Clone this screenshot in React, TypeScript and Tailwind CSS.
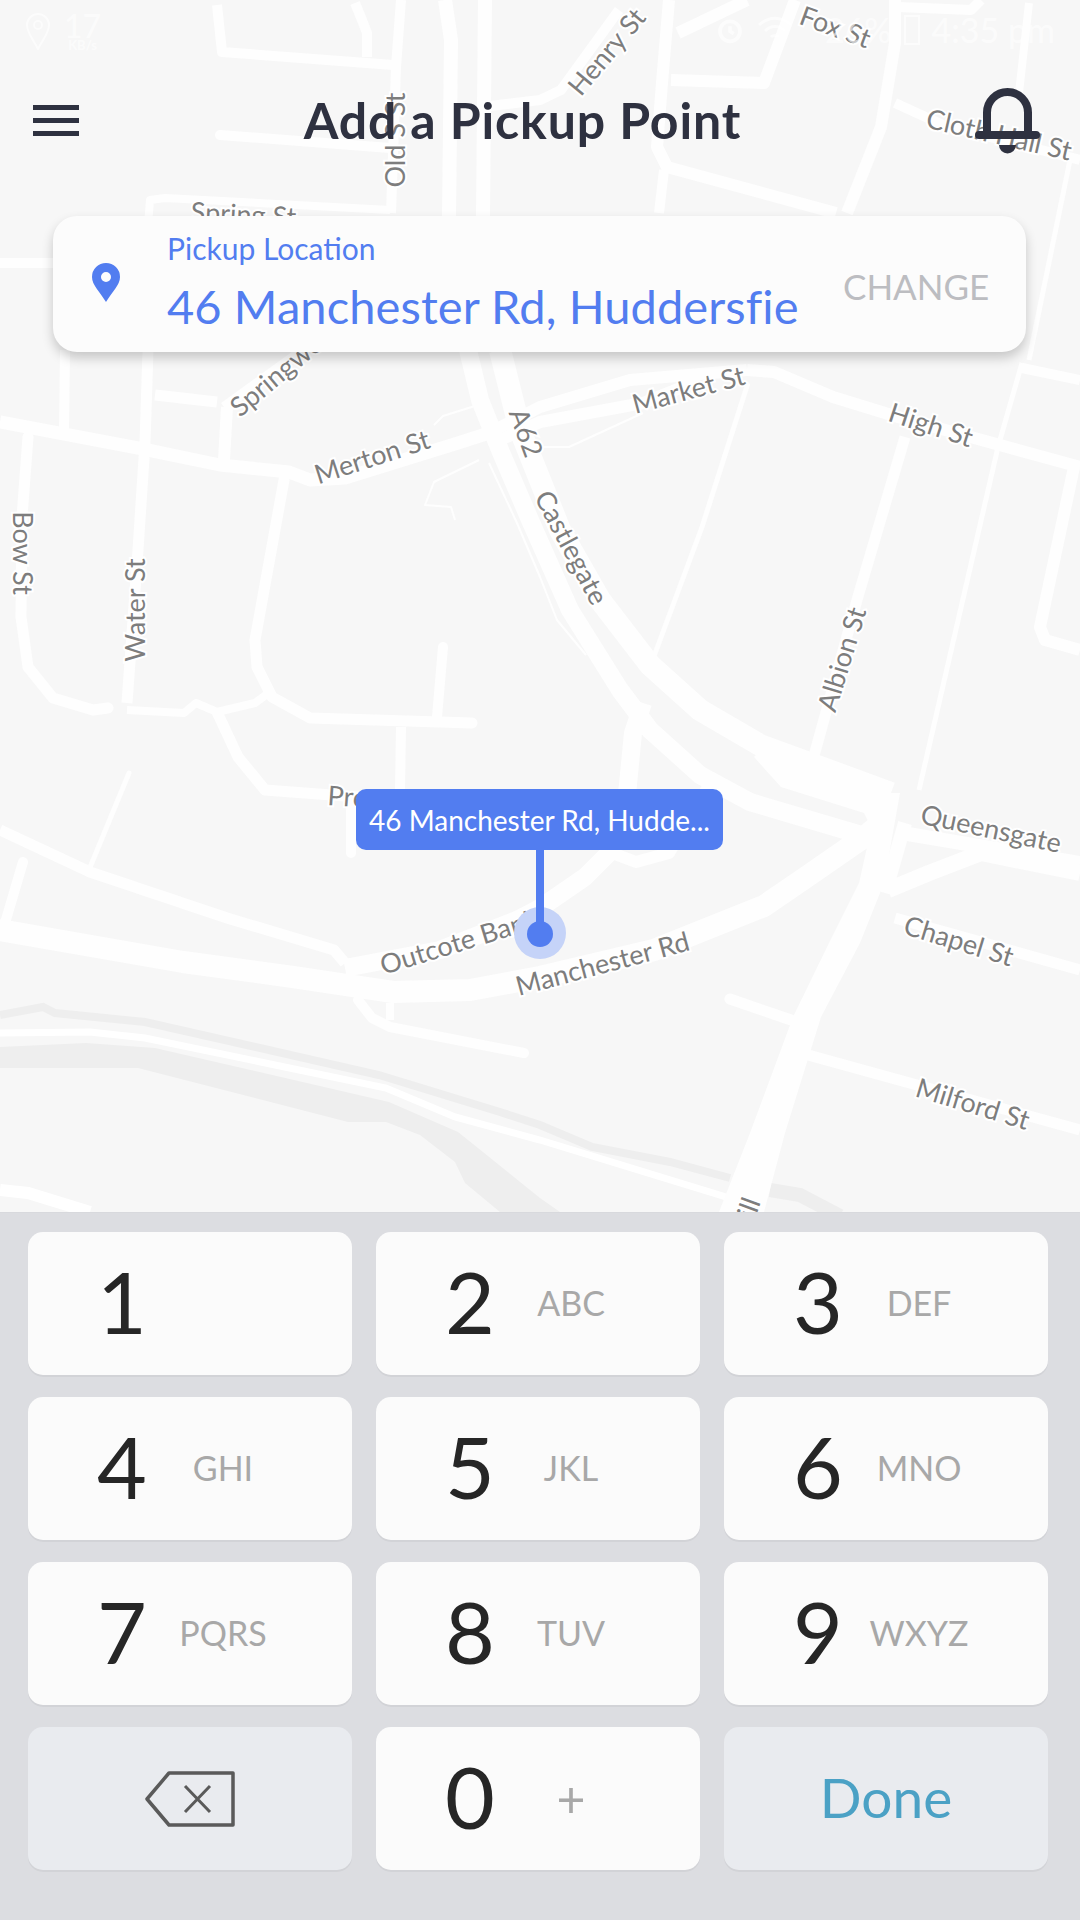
import React from 'react';

type Road = { w: number; d: string; cap?: boolean };

const roads: Road[] = [
  { w: 10, d: '217,5 222,52 393,65' },
  { w: 10, d: '355,3 362,20 367,33 367,57' },
  { w: 10, d: '401,0 396,67 391,213' },
  { w: 10, d: '220,135 390,148', cap: true },
  { w: 8, d: '148,225 150,200 165,198 390,210' },
  { w: 10, d: '0,263 60,263' },
  { w: 10, d: '65,350 64,430' },
  { w: 11, d: '148,350 145,443 138,550 127,703' },
  { w: 11, d: '155,395 217,402' },
  { w: 10, d: '224,407 303,350' },
  { w: 12, d: '227,407 224,460' },
  { w: 13, d: '0,422 138,448 220,465 289,472 310,480 345,478 458,443 489,433' },
  { w: 12, d: '489,433 540,407 630,380 747,370' },
  { w: 12, d: '489,445 540,422 643,403 700,380' },
  { w: 11, d: '28,437 22,517 21,617 28,667 53,698 93,710 108,708', cap: true },
  { w: 8, d: '127,710 184,713 196,703 217,712 255,703 270,692' },
  { w: 11, d: '217,712 238,757 265,790 358,797' },
  { w: 11, d: '284,480 255,640 257,667 272,697 310,718 472,723', cap: true },
  { w: 10, d: '443,647 437,717', cap: true },
  { w: 10, d: '401,727 400,790' },
  { w: 10, d: '351,797 351,853', cap: true },
  { w: 5, d: '129,773 91,865', cap: true },
  { w: 11, d: '0,830 90,872 227,918 334,950 345,963' },
  { w: 10, d: '23,862 5,923 0,925', cap: true },
  { w: 22, d: '0,930 183,962 293,977 393,992 470,990 540,977 654,950 764,906 802,880 867,835 885,820' },
  { w: 18, d: '345,968 440,950 517,920 540,908 585,877 612,850 625,815 633,733 643,703' },
  { w: 12, d: '612,853 636,862 669,853 712,780' },
  { w: 18, d: '468,350 480,400 500,450 530,520 570,610 620,690 650,730 700,775 750,802 885,842' },
  { w: 22, d: '500,350 520,430 560,530 600,600 650,665 700,710 760,745 891,793' },
  { w: 14, d: '445,0 451,40 449,216' },
  { w: 14, d: '485,0 483,216' },
  { w: 14, d: '905,823 885,893' },
  { w: 16, d: '888,890 929,873 981,853 1080,873' },
  { w: 14, d: '902,833 1080,863' },
  { w: 11, d: '895,918 1080,970' },
  { w: 11, d: '790,1050 1080,1130' },
  { w: 11, d: '730,999 791,1020', cap: true },
  { w: 11, d: '905,437 857,600 812,763' },
  { w: 5, d: '748,383 702,527 650,667' },
  { w: 5, d: '1022,363 998,447 919,790' },
  { w: 5, d: '1070,160 1029,360' },
  { w: 8, d: '1029,3 1019,93' },
  { w: 12, d: '747,370 774,372 833,397 898,417 1080,467' },
  { w: 12, d: '1074,467 1040,627 1045,640 1080,650' },
  { w: 10, d: '1022,368 1080,380' },
  { w: 12, d: '669,0 662,83 657,147 667,167 836,213' },
  { w: 10, d: '664,170 659,213' },
  { w: 12, d: '671,80 764,83 795,0' },
  { w: 12, d: '895,0 895,43 881,127 847,213' },
  { w: 10, d: '895,103 943,125 1080,160' },
  { w: 12, d: '747,0 678,33' },
  { w: 10, d: '898,7 971,10 981,0' },
  { w: 10, d: '619,10 561,90 540,100 490,106' },
  { w: 10, d: '358,1000 372,1018 390,1027 524,1053', cap: true },
  { w: 8, d: '390,1003 390,1020' },
  { w: 2, d: '479,460 434,482 425,505 451,507 455,520' },
  { w: 2, d: '489,463 517,523 540,577 557,620 586,655' },
  { w: 2, d: '643,413 569,447 540,447 525,440' },
  { w: 2, d: '434,425 443,416 478,405' },
];

// wide carriageways that change width, drawn as filled shapes
const patches = [
  '879,793 900,793 884,883 860,943 821,1017 785,1133 764,1212 719,1212 750,1133 793,1017 829,943 859,883',
  '754,757 781,787 864,813 875,835 895,800 764,747',
];

type Label = { t: string; x: number; y: number; r: number; a?: 'start' | 'middle' | 'end' };

const labels: Label[] = [
  { t: 'Spring St', x: 243, y: 224, r: 3 },
  { t: 'Old S St', x: 405, y: 140, r: -90 },
  { t: 'Henry St', x: 614, y: 58, r: -50 },
  { t: 'Fox St', x: 832, y: 36, r: 20 },
  { t: 'Cloth Hall St', x: 997, y: 144, r: 13 },
  { t: 'Springwood St', x: 240, y: 418, r: -40, a: 'start' },
  { t: 'Merton St', x: 375, y: 466, r: -18 },
  { t: 'A62', x: 517, y: 436, r: 70 },
  { t: 'Market St', x: 691, y: 399, r: -15 },
  { t: 'High St', x: 928, y: 434, r: 18 },
  { t: 'Castlegate', x: 563, y: 552, r: 62 },
  { t: 'Bow St', x: 13, y: 553, r: 90 },
  { t: 'Water St', x: 145, y: 610, r: -90 },
  { t: 'Albion St', x: 851, y: 662, r: -73 },
  { t: 'Queensgate', x: 989, y: 838, r: 12 },
  { t: 'Chapel St', x: 956, y: 950, r: 17 },
  { t: 'Milford St', x: 970, y: 1113, r: 17 },
  { t: 'Manchester Rd', x: 605, y: 973, r: -15 },
  { t: 'Outcote Bank', x: 462, y: 951, r: -17 },
  { t: 'Prospect St', x: 327, y: 805, r: 4, a: 'start' },
  { t: 'Hill', x: 761, y: 1202, r: -70, a: 'end' },
];

const keys = [
  ['1', ''],
  ['2', 'ABC'],
  ['3', 'DEF'],
  ['4', 'GHI'],
  ['5', 'JKL'],
  ['6', 'MNO'],
  ['7', 'PQRS'],
  ['8', 'TUV'],
  ['9', 'WXYZ'],
];

const MapLayer = () => (
  <svg className="absolute inset-0" width="1080" height="1212" viewBox="0 0 1080 1212">
    <rect width="1080" height="1212" fill="#f7f7f7" />
    <polygon
      fill="#eeeeee"
      points="0,1047 86,1043 155,1048 389,1102 458,1132 540,1198 560,1212 500,1212 465,1183 455,1162 420,1135 386,1122 348,1122 138,1068 0,1068"
    />
    <polyline
      fill="none"
      stroke="#eeeeee"
      strokeWidth="8"
      points="0,1015 43,1007 55,1013 145,1022 379,1075 500,1112 540,1125 592,1147 670,1162 730,1178"
    />
    <polyline fill="none" stroke="#eeeeee" strokeWidth="14" points="770,1190 800,1195 840,1216" />
    <polyline
      fill="none"
      stroke="#ffffff"
      strokeWidth="7"
      points="0,1033 90,1032 145,1038 386,1088 455,1117 540,1140 726,1197 760,1212"
    />
    <polyline fill="none" stroke="#ffffff" strokeWidth="12" points="0,1190 28,1193 90,1212" />
    {roads.map((road, i) => (
      <polyline
        key={i}
        points={road.d}
        fill="none"
        stroke="#fefefe"
        strokeWidth={road.w}
        strokeLinejoin="round"
        strokeLinecap={road.cap ? 'round' : 'butt'}
      />
    ))}
    {patches.map((p, i) => (
      <polygon key={i} points={p} fill="#fefefe" />
    ))}
    {labels.map(l => (
      <text
        key={l.t}
        transform={`translate(${l.x} ${l.y}) rotate(${l.r})`}
        textAnchor={l.a || 'middle'}
        fontSize="27"
        fill="#7d7d7d"
        stroke="#ffffff"
        strokeWidth="4"
        paintOrder="stroke"
      >
        {l.t}
      </text>
    ))}
  </svg>
);

const StatusBar = () => (
  <div className="h-[64px] flex justify-between pl-[26px] pr-[25px] text-white/60">
    <div className="flex pt-[13px] gap-[14px]">
      <svg width="24" height="37" viewBox="0 0 24 37" fill="none" stroke="currentColor" strokeWidth="2">
        <path d="M12 36 C7 26 1 20 1 12 a11 11 0 0 1 22 0 C23 20 17 26 12 36 Z" />
        <circle cx="12" cy="12" r="4" />
      </svg>
      <div className="flex flex-col items-center">
        <span className="text-[32px] leading-[26px]">17</span>
        <span className="text-[13px] leading-[13px] font-bold">KB/s</span>
      </div>
    </div>
    <div className="flex items-center h-[50px] pt-[10px] gap-[12px]">
      <svg width="30" height="30" viewBox="0 0 24 24" fill="none" stroke="currentColor" strokeWidth="3">
        <circle cx="12" cy="13" r="8" />
        <path d="M12 9v4l3 2" />
      </svg>
      <svg width="36" height="30" viewBox="0 0 36 30" fill="none" stroke="currentColor" strokeWidth="3">
        <path d="M2 10 C12 1 24 1 34 10 M8 16 C14 10 22 10 28 16 M14 22 C16 20 20 20 22 22" />
      </svg>
      <span className="text-[34px] leading-none ml-[20px]">26%</span>
      <div className="w-[16px] h-[30px] border-2 border-white/60" />
      <span className="text-[34px] leading-none">4:35 pm</span>
    </div>
  </div>
);

const Header = () => (
  <div className="h-[90px] mt-[11px] flex items-center justify-between pl-[33px] pr-[40px]">
    <div className="flex flex-col gap-[8px] w-[46px]">
      <div className="h-[5px] bg-[#2e3140]" />
      <div className="h-[5px] bg-[#2e3140]" />
      <div className="h-[5px] bg-[#2e3140]" />
    </div>
    <h1 className="mr-[8px] text-[50px] leading-none font-bold text-[#2e3140] tracking-[0.9px]">Add a Pickup Point</h1>
    <svg width="66" height="66" viewBox="0 0 66 66" className="mt-[2px]">
      <path d="M13 47 V24.5 a20.5 20.5 0 0 1 41 0 V47" fill="none" stroke="#2e3140" strokeWidth="8" />
      <path d="M5 47 H62" fill="none" stroke="#2e3140" strokeWidth="8" strokeLinecap="round" />
      <path d="M25 57 h17 a8.5 8.5 0 0 1 -17 0 z" fill="#2e3140" />
    </svg>
  </div>
);

const LocationCard = () => (
  <div className="mt-[51px] ml-[53px] w-[973px] h-[136px] rounded-[24px] bg-[#fcfcfc] shadow-[0_6px_12px_rgba(0,0,0,0.2)] flex items-center pl-[39px]">
    <svg width="28" height="39" viewBox="0 0 28 39" className="mr-[47px] mt-[-3px] shrink-0">
      <path
        fillRule="evenodd"
        fill="#527df0"
        d="M14 39 C8 29 0 22 0 14 a14 14 0 0 1 28 0 C28 22 20 29 14 39 Z M14 9 a5 5 0 1 0 0 10 a5 5 0 0 0 0 -10 Z"
      />
    </svg>
    <div className="w-[640px] mt-[-4px]">
      <div className="text-[30px] leading-[36px] text-[#527df0]">Pickup Location</div>
      <div className="text-[47px] leading-[56px] mt-[12px] text-[#527df0] whitespace-nowrap tracking-[0.1px]">46 Manchester Rd, Huddersfie</div>
    </div>
    <span className="ml-[36px] text-[35px] leading-none text-[#bcbdc1] mt-[4px]">CHANGE</span>
  </div>
);

const Marker = () => (
  <div className="absolute left-[356px] top-[789px] w-[367px] flex flex-col items-center">
    <div className="absolute top-[118px] left-[158px] w-[52px] h-[52px] rounded-full bg-[#c5d3f8]" />
    <div className="relative w-full h-[61px] rounded-[10px] bg-[#527df0] flex items-center justify-center text-[28px] leading-none text-white whitespace-nowrap">
      46 Manchester Rd, Hudde...
    </div>
    <div className="relative w-[8px] h-[84px] bg-[#527df0]" />
    <div className="absolute top-[132px] left-[171px] w-[26px] h-[26px] rounded-full bg-[#527df0]" />
  </div>
);

const Keypad = () => (
  <div className="flex-1 bg-[#dcdde1] pt-[19px] pl-[28px] grid grid-cols-[repeat(3,324px)] auto-rows-[143px] gap-x-[24px] gap-y-[22px] border-t border-[#d8d9dd]">
    {keys.map(([n, letters]) => (
      <div key={n} className="rounded-[15px] bg-[#fbfbfb] shadow-[0_2px_0_#d2d3d7] flex items-center pl-[48px]">
        <span className="w-[92px] mt-[-5px] text-center text-[86px] leading-none text-[#262626]">{n}</span>
        <span className="w-[110px] mt-[-2px] text-center text-[34px] leading-none text-[#a8a8a8]">{letters}</span>
      </div>
    ))}
    <div className="rounded-[15px] bg-[#e9ebef] shadow-[0_2px_0_#d2d3d7] flex items-center justify-center">
      <svg width="90" height="56" viewBox="0 0 90 56" fill="none" stroke="#5a5a5a">
        <path d="M24 2 H88 V54 H24 L2 28 Z" strokeWidth="3.5" strokeLinejoin="round" />
        <path d="M40 15 L65 41 M65 15 L40 41" strokeWidth="3" />
      </svg>
    </div>
    <div className="rounded-[15px] bg-[#fbfbfb] shadow-[0_2px_0_#d2d3d7] flex items-center pl-[48px]">
      <span className="w-[92px] mt-[-5px] text-center text-[86px] leading-none text-[#262626]">0</span>
      <span className="w-[110px] mt-[-2px] text-center text-[50px] leading-none text-[#a8a8a8]">+</span>
    </div>
    <div className="rounded-[15px] bg-[#e9ebef] shadow-[0_2px_0_#d2d3d7] flex items-center justify-center">
      <span className="mt-[-2px] text-[55px] leading-none text-[#4ba1c5]">Done</span>
    </div>
  </div>
);

const App: React.FC = () => {
  return (
    <div className="w-[1080px] h-[1920px] flex flex-col overflow-hidden [font-family:Lato,sans-serif]">
      <div className="relative h-[1212px] shrink-0">
        <MapLayer />
        <div className="relative">
          <StatusBar />
          <Header />
          <LocationCard />
        </div>
        <Marker />
      </div>
      <Keypad />
    </div>
  );
};

export default App;
